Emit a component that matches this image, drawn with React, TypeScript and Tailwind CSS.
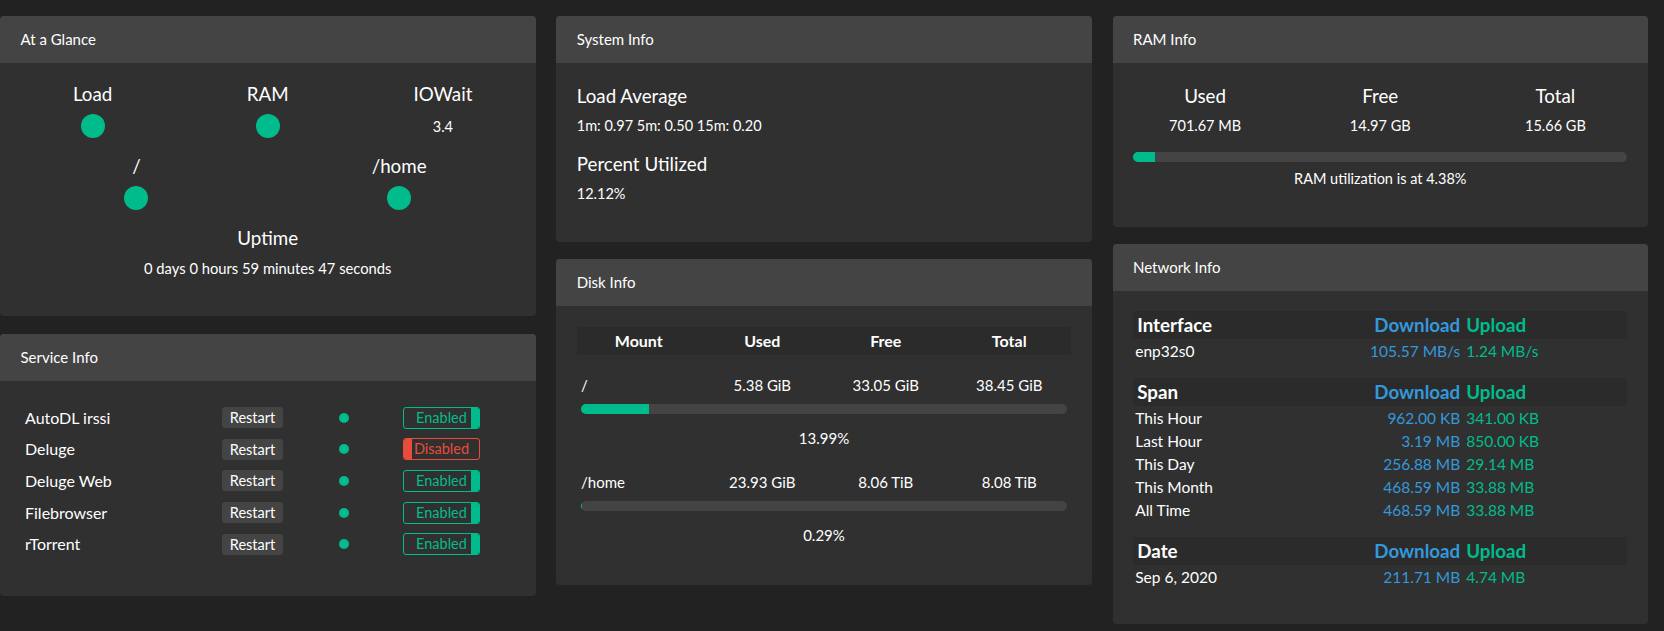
import type { ReactNode } from 'react';

type Service = { name: string; enabled: boolean };

const services: Service[] = [
  { name: 'AutoDL irssi', enabled: true },
  { name: 'Deluge', enabled: false },
  { name: 'Deluge Web', enabled: true },
  { name: 'Filebrowser', enabled: true },
  { name: 'rTorrent', enabled: true },
];

const disks = [
  { mount: '/', used: '5.38 GiB', free: '33.05 GiB', total: '38.45 GiB', pct: 13.99 },
  { mount: '/home', used: '23.93 GiB', free: '8.06 TiB', total: '8.08 TiB', pct: 0.29 },
];

const spans = [
  { span: 'This Hour', down: '962.00 KB', up: '341.00 KB' },
  { span: 'Last Hour', down: '3.19 MB', up: '850.00 KB' },
  { span: 'This Day', down: '256.88 MB', up: '29.14 MB' },
  { span: 'This Month', down: '468.59 MB', up: '33.88 MB' },
  { span: 'All Time', down: '468.59 MB', up: '33.88 MB' },
];

export default function App() {
  return (
    <div className="min-h-[631px] bg-[#222222] font-[Lato,sans-serif] text-white">
      <div className="grid grid-cols-3 items-start gap-x-[20.75px] pr-[16px] pt-[16px]">
        <div className="flex flex-col gap-[18px]">
          <AtAGlance />
          <ServiceInfo />
        </div>
        <div className="flex flex-col gap-[17px]">
          <SystemInfo />
          <DiskInfo />
        </div>
        <div className="flex flex-col gap-[17px]">
          <RamInfo />
          <NetworkInfo />
        </div>
      </div>
    </div>
  );
}

function Card({ title, children }: { title: string; children: ReactNode }) {
  return (
    <section className="overflow-hidden rounded-[4px] bg-[#303030]">
      <div className="h-[47px] bg-[#444444] px-[20.5px] text-[15px] leading-[47px]">{title}</div>
      {children}
    </section>
  );
}

function Dot({ size = 'lg' }: { size?: 'lg' | 'sm' }) {
  return (
    <span
      className={
        size === 'lg'
          ? 'mx-auto block h-[24px] w-[24px] rounded-full bg-[#00bc8c]'
          : 'block h-[10px] w-[10px] rounded-full bg-[#00bc8c]'
      }
    />
  );
}

function Stat({ label, children }: { label: string; children: ReactNode }) {
  return (
    <div className="text-center">
      <div className="text-[18.75px] leading-[22.5px]">{label}</div>
      <div className="mt-[8.5px] h-[24px]">{children}</div>
    </div>
  );
}

function AtAGlance() {
  return (
    <Card title="At a Glance">
      <div className="px-[5px] pb-[37px] pt-[20px] text-center">
        <div className="grid grid-cols-3">
          <Stat label="Load">
            <Dot />
          </Stat>
          <Stat label="RAM">
            <Dot />
          </Stat>
          <Stat label="IOWait">
            <span className="text-[14.5px] leading-[24px]">3.4</span>
          </Stat>
        </div>
        <div className="mt-[17px] grid grid-cols-2">
          <Stat label="/">
            <Dot />
          </Stat>
          <Stat label="/home">
            <Dot />
          </Stat>
        </div>
        <div className="mt-[17px] text-[18.75px] leading-[22.5px]">Uptime</div>
        <div className="mt-[7px] text-[14.75px] leading-[22.5px]">0 days 0 hours 59 minutes 47 seconds</div>
      </div>
    </Card>
  );
}

function Badge({ enabled }: { enabled: boolean }) {
  return (
    <span
      className={`relative ml-[54px] block h-[22px] w-[77px] overflow-hidden rounded-[3px] border text-center text-[14.5px] leading-[20px] ${
        enabled ? 'border-[#00bc8c] text-[#00bc8c]' : 'border-[#e74c3c] text-[#e74c3c]'
      }`}
    >
      {enabled ? 'Enabled' : 'Disabled'}
      <span
        className={`absolute bottom-0 top-0 w-[8px] ${
          enabled ? 'right-0 bg-[#00bc8c]' : 'left-0 bg-[#e74c3c]'
        }`}
      />
    </span>
  );
}

function ServiceInfo() {
  return (
    <Card title="Service Info">
      <div className="pb-[36px] pl-[25px] pt-[21px]">
        {services.map((s) => (
          <div key={s.name} className="flex h-[31.6px] items-center">
            <div className="w-[197px] text-[16px]">{s.name}</div>
            <button
              type="button"
              className="h-[21px] w-[61px] rounded-[3px] bg-[#444444] text-[14.5px] leading-[21px] text-white"
            >
              Restart
            </button>
            <span className="ml-[56px]">
              <Dot size="sm" />
            </span>
            <Badge enabled={s.enabled} />
          </div>
        ))}
      </div>
    </Card>
  );
}

function SystemInfo() {
  return (
    <Card title="System Info">
      <div className="px-[20.5px] pb-[36.75px] pt-[21.75px]">
        <div className="text-[18.75px] leading-[22.5px]">Load Average</div>
        <div className="mt-[7.5px] text-[14.5px] leading-[22.5px]">1m: 0.97 5m: 0.50 15m: 0.20</div>
        <div className="mt-[15.5px] text-[18.75px] leading-[22.5px]">Percent Utilized</div>
        <div className="mt-[7.5px] text-[14.5px] leading-[22.5px]">12.12%</div>
      </div>
    </Card>
  );
}

function Bar({ pct }: { pct: number }) {
  return (
    <div className="h-[10px] overflow-hidden rounded-[5px] bg-[#444444]">
      <div className="h-full bg-[#00bc8c]" style={{ width: `${pct}%` }} />
    </div>
  );
}

function DiskInfo() {
  return (
    <Card title="Disk Info">
      <div className="px-[20.75px] pb-[38px] pt-[21px] text-[15px]">
        <div className="grid h-[28px] grid-cols-4 items-center bg-[#2b2b2b] text-center text-[16px] font-bold">
          <div>Mount</div>
          <div>Used</div>
          <div>Free</div>
          <div>Total</div>
        </div>
        {disks.map((d, i) => (
          <div key={d.mount} className={i === 0 ? 'mt-[19px]' : 'mt-[21.5px]'}>
            <div className="grid grid-cols-4 leading-[22.5px]">
              <div className="pl-[4px]">{d.mount}</div>
              <div className="text-center">{d.used}</div>
              <div className="text-center">{d.free}</div>
              <div className="text-center">{d.total}</div>
            </div>
            <div className="mx-[4px] mt-[7px]">
              <Bar pct={d.pct} />
            </div>
            <div className="mt-[13.5px] text-center leading-[22.5px]">{d.pct.toFixed(2)}%</div>
          </div>
        ))}
      </div>
    </Card>
  );
}

function RamInfo() {
  return (
    <Card title="RAM Info">
      <div className="pb-[36.75px] pt-[21.75px] text-center">
        <div className="grid grid-cols-3 px-[5px]">
          {[
            ['Used', '701.67 MB'],
            ['Free', '14.97 GB'],
            ['Total', '15.66 GB'],
          ].map(([label, value]) => (
            <div key={label}>
              <div className="text-[18.75px] leading-[22.5px]">{label}</div>
              <div className="mt-[7.5px] text-[14.5px] leading-[22.5px]">{value}</div>
            </div>
          ))}
        </div>
        <div className="mt-[14.75px] px-[20.75px]">
          <Bar pct={4.38} />
        </div>
        <div className="mt-[5.75px] text-[14.5px] leading-[22.5px]">RAM utilization is at 4.38%</div>
      </div>
    </Card>
  );
}

function NetHead({ label }: { label: string }) {
  return (
    <div className="grid h-[28px] grid-cols-[230px_100px_1fr] items-center bg-[#2b2b2b] text-[18.75px] font-bold">
      <div className="pl-[4px]">{label}</div>
      <div className="pr-[3px] text-right text-[#3498db]">Download</div>
      <div className="pl-[3px] text-[#00bc8c]">Upload</div>
    </div>
  );
}

function NetRow({ label, down, up, first }: { label: string; down: string; up: string; first?: boolean }) {
  return (
    <div className={`grid grid-cols-[230px_100px_1fr] text-[15.5px] leading-[23px] ${first ? 'mt-[1px]' : ''}`}>
      <div className="pl-[2px]">{label}</div>
      <div className="whitespace-nowrap pr-[3px] text-right text-[#3498db]">{down}</div>
      <div className="whitespace-nowrap pl-[3px] text-[#00bc8c]">{up}</div>
    </div>
  );
}

function NetworkInfo() {
  return (
    <Card title="Network Info">
      <div className="px-[20.75px] pb-[35px] pt-[20px]">
        <NetHead label="Interface" />
        <NetRow first label="enp32s0" down="105.57 MB/s" up="1.24 MB/s" />

        <div className="mt-[15px]">
          <NetHead label="Span" />
          {spans.map((s, i) => (
            <NetRow key={s.span} first={i === 0} label={s.span} down={s.down} up={s.up} />
          ))}
        </div>

        <div className="mt-[15px]">
          <NetHead label="Date" />
          <NetRow first label="Sep 6, 2020" down="211.71 MB" up="4.74 MB" />
        </div>
      </div>
    </Card>
  );
}
